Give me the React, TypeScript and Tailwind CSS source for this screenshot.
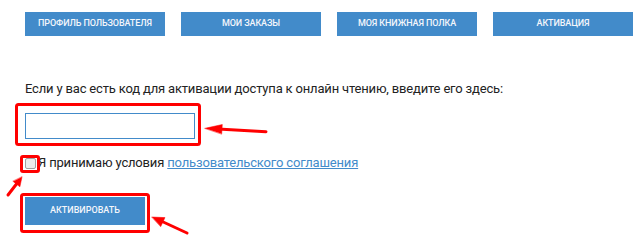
import React from "react";

const navItems = [
  "ПРОФИЛЬ ПОЛЬЗОВАТЕЛЯ",
  "МОИ ЗАКАЗЫ",
  "МОЯ КНИЖНАЯ ПОЛКА",
  "АКТИВАЦИЯ",
];

export default function App() {
  return (
    <div
      className="relative w-[640px] h-[242px] bg-white overflow-hidden text-[#222]"
      style={{ fontFamily: "Roboto, 'Liberation Sans', sans-serif" }}
    >
      <div className="flex flex-col pl-[25px] pt-[12px]">
        <nav className="flex gap-[16px]">
          {navItems.map((t) => (
            <div
              key={t}
              className="w-[140px] h-[24px] bg-[#428bca] text-[#f4f6fb] text-[9px] font-medium flex items-center justify-center tracking-[-0.1px]"
            >
              {t}
            </div>
          ))}
        </nav>

        <p className="mt-[44px] text-[13px] leading-[18px] tracking-[-0.17px]">
          Если у вас есть код для активации доступа к онлайн чтению, введите его здесь:
        </p>

        <input
          type="text"
          className="mt-[15px] w-[170px] h-[26px] border border-[#428bca] outline-none bg-white"
        />

        <label className="mt-[15px] flex items-center text-[13px] leading-[18px] tracking-[-0.17px]">
          <span className="w-[11px] h-[11px] border border-[#a0a0a0] rounded-[2px] bg-[#ececec] mr-[2px]" />
          <span>
            Я принимаю условия{" "}
            <a href="#" className="text-[#428bca] underline">
              пользовательского соглашения
            </a>
          </span>
        </label>

        <button className="mt-[25px] w-[120px] h-[28px] bg-[#428bca] text-[#f4f6fb] text-[9px] font-medium flex items-center justify-center">
          АКТИВИРОВАТЬ
        </button>
      </div>

      <svg
        className="absolute inset-0 pointer-events-none"
        width="640"
        height="242"
        viewBox="0 0 640 242"
      >
        <g fill="none" stroke="#ff0000" strokeWidth="3">
          <rect x="16.5" y="104.5" width="183" height="40" rx="2" />
          <rect x="21.5" y="156.5" width="17" height="15" rx="1.5" />
          <rect x="21.5" y="194.5" width="127" height="37" rx="2" />
        </g>
        <g fill="#ff0000" stroke="#ff0000" strokeLinecap="round">
          <line x1="266" y1="131.7" x2="218" y2="129" strokeWidth="3" />
          <polygon points="205,128.3 222.3,124.5 221.7,133.8" strokeWidth="0.5" />
          <line x1="8" y1="195" x2="18" y2="182" strokeWidth="3" />
          <polygon points="22,177 19.9,186.8 13.1,181.4" strokeWidth="0.5" />
          <line x1="187" y1="233" x2="160" y2="220.5" strokeWidth="3" />
          <polygon points="152,217 165,217.6 160.8,226.4" strokeWidth="0.5" />
        </g>
      </svg>
    </div>
  );
}
